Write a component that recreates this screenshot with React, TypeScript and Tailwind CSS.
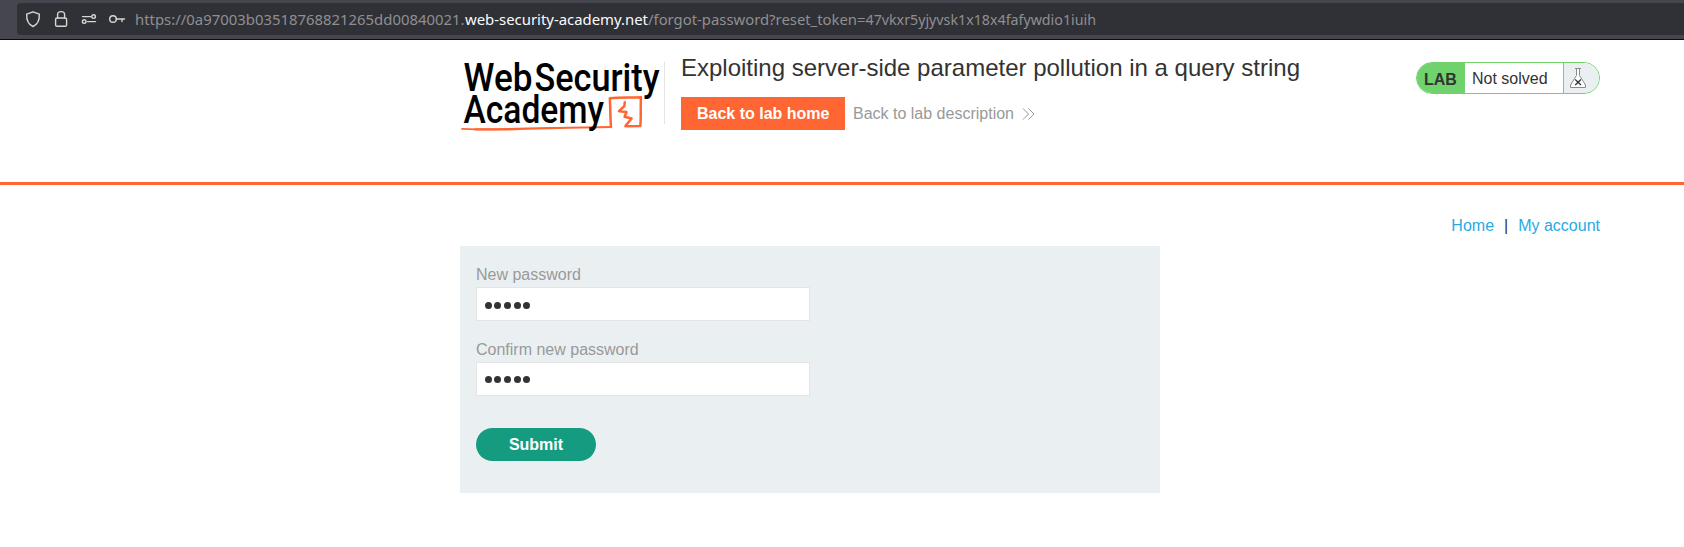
import React from "react";

const SANS = "font-['Liberation_Sans',Arial,sans-serif]";

function AddressBar() {
  return (
    <div className="flex h-10 border-b border-[#0c0c0d] bg-[#45464e] pt-[3px] pl-[17px]">
      <div className="flex h-8 w-full items-center rounded-l-[4px] bg-[#303136]">
        <svg width="118" height="32" viewBox="17 3 118 32" fill="none" stroke="#d6d6d2" strokeWidth="1.4" strokeLinecap="round" strokeLinejoin="round">
          <path d="M33 11.8 L39.3 14.2 C39.6 20 37.8 24.3 33 26.5 C28.2 24.3 26.4 20 26.7 14.2 Z" />
          <rect x="55.6" y="18" width="11" height="8.3" rx="1.4" />
          <path d="M57.6 18 V14.6 C57.6 10.6 64.6 10.6 64.6 14.6 V18" />
          <path d="M82.5 16.6 H91" />
          <circle cx="93.6" cy="16.6" r="1.8" />
          <circle cx="84.2" cy="21.6" r="1.8" />
          <path d="M87.5 21.6 H95.5" />
          <circle cx="113" cy="19" r="3.3" />
          <path d="M116.3 19 H124.5 M122 19 V21.6" />
        </svg>
        <svg width="980" height="32" className="font-['Noto_Sans',sans-serif] text-[15px]" fill="#8f8f92">
          <text x="0" y="22" textLength="329.5" lengthAdjust="spacingAndGlyphs">https://0a97003b03518768821265dd00840021.</text>
          <text x="330" y="22" textLength="183" lengthAdjust="spacingAndGlyphs" fill="#fbfbfe">web-security-academy.net</text>
          <text x="513" y="22" textLength="217.5" lengthAdjust="spacingAndGlyphs">/forgot-password?reset_token=</text>
          <text x="730.5" y="22" textLength="230.5" lengthAdjust="spacingAndGlyphs">47vkxr5yjyvsk1x18x4fafywdio1iuih</text>
        </svg>
      </div>
    </div>
  );
}

function Logo() {
  return (
    <svg width="204" height="88" viewBox="460 48 204 88" className="shrink-0 overflow-visible font-['Roboto','Liberation_Sans',sans-serif] font-medium">
      <g fill="none" stroke="#ff6633" strokeLinejoin="round" strokeLinecap="round">
        <path d="M462 128.8 C480 129.6 500 129.6 520 129" strokeWidth="1.8" />
        <path d="M475 129.3 C520 129.8 560 127.4 609.5 127" strokeWidth="2.2" />
        <path d="M611 127 C610.2 118 610.4 106 609.8 98.3 C620 97.2 631 97.8 641 97.2 C640.4 106 641.2 118 640.3 126 L625.5 126.2" strokeWidth="2.5" />
        <path d="M624.8 102.2 L624.4 106 L619 111.2 L626.5 112 L624.6 116.8 L631.6 118.5 L625.8 125.5" strokeWidth="2.5" />
      </g>
      <g fill="#000" fontSize="38">
        <text x="463.5" y="90.8" textLength="69" lengthAdjust="spacingAndGlyphs">Web</text>
        <text x="534.5" y="90.8" textLength="125" lengthAdjust="spacingAndGlyphs">Security</text>
        <text x="463.5" y="123" textLength="140.5" lengthAdjust="spacingAndGlyphs">Academy</text>
      </g>
    </svg>
  );
}

function LabStatus() {
  return (
    <div className="mt-[22px] flex h-8 w-[184px] overflow-hidden rounded-full border border-[#70d26c] bg-white text-base text-[#333332]">
      <span className="w-12 bg-[#70d26c] pt-[5px] pl-[7px] leading-6 font-bold">LAB</span>
      <span className="w-[98px] pt-[4px] pl-[7px] leading-6">Not solved</span>
      <span className="flex-1 border-l border-[#70d26c] bg-[#eaf0f2]">
        <svg width="34" height="30" viewBox="1564 63 34 30" fill="none">
          <path d="M1575 68.5 H1581 M1576.5 69 V75.5 L1570.5 85 V87.5 H1585.5 V85 L1579.5 75.5 V69" fill="#fff" stroke="#8a8a8a" />
          <path d="M1575.2 79.5 L1581 85 M1581 79.5 L1575.2 85" stroke="#333332" strokeWidth="1.3" />
        </svg>
      </span>
    </div>
  );
}

function PasswordField({ label, dots }: { label: string; dots: string }) {
  return (
    <label className="block h-[75px] text-base text-[#999]">
      <span className="block h-[25px] pt-[1px] leading-6">{label}</span>
      <span className={`flex h-[34px] w-[334px] items-start gap-[2.7px] border border-[#e4e4e4] bg-white pl-[7.7px] ${dots}`}>
        {[0, 1, 2, 3, 4].map((i) => (
          <i key={i} className="size-[7px] rounded-full bg-[#333332]" />
        ))}
      </span>
    </label>
  );
}

export default function App() {
  return (
    <div className={`h-[547px] overflow-hidden bg-white text-[#333332] ${SANS}`}>
      <AddressBar />
      <header className="h-[145px] border-b-[3px] border-[#ff6633]">
        <div className="ml-[460px] flex w-[1140px]">
          <div className="pt-2">
            <Logo />
          </div>
          <div className="mt-[22px] h-[62px] w-px bg-[#e4e4e4]" />
          <div className="ml-4 flex-1 pt-3">
            <h2 className="text-2xl leading-[32px]">Exploiting server-side parameter pollution in a query string</h2>
            <div className="mt-[13px] flex items-center">
              <a className="h-[33px] w-[164px] bg-[#ff6633] pl-4 text-base leading-[33px] font-bold text-white">Back to lab home</a>
              <a className="ml-2 flex items-center text-base leading-[33px] text-[#999]">
                Back to lab description
                <svg width="13" height="14" className="ml-[8px]" fill="none" stroke="#999">
                  <path d="M1 1.5 L6.5 7 L1 12.5 M6.5 1.5 L12 7 L6.5 12.5" />
                </svg>
              </a>
            </div>
          </div>
          <LabStatus />
        </div>
      </header>
      <nav className="ml-[460px] flex h-[61px] w-[1140px] justify-end pt-[29px] text-base leading-6 text-[#29aae3]">
        <a>Home</a>
        <span className="px-[10px] text-[#333332]">|</span>
        <a>My account</a>
      </nav>
      <form className="ml-[460px] h-[247px] w-[700px] bg-[#eaf0f2] px-4 pt-4">
        <PasswordField label="New password" dots="pt-[14px]" />
        <PasswordField label="Confirm new password" dots="pt-[13px]" />
        <button type="button" className="mt-4 h-[33px] w-[120px] rounded-full bg-[#159b80] text-base leading-[33px] font-bold text-white">
          Submit
        </button>
      </form>
    </div>
  );
}
